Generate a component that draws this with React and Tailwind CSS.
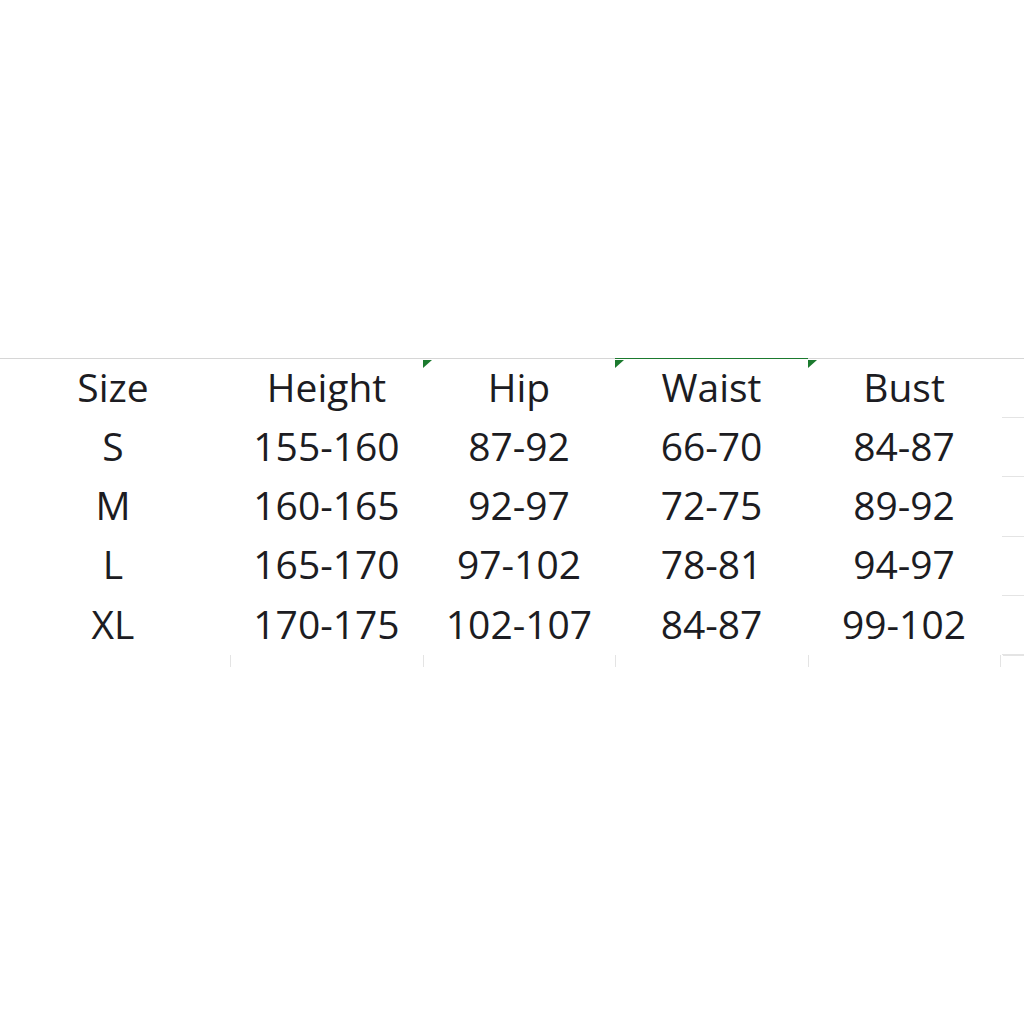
import React from "react";

const headers = ["Size", "Height", "Hip", "Waist", "Bust"];

const rows = [
  ["S", "155-160", "87-92", "66-70", "84-87"],
  ["M", "160-165", "92-97", "72-75", "89-92"],
  ["L", "165-170", "97-102", "78-81", "94-97"],
  ["XL", "170-175", "102-107", "84-87", "99-102"],
];

// little green "number stored as text" flag in the cell corner
const Flag = () => (
  <svg className="absolute left-0 top-[1px]" width="9" height="8" viewBox="0 0 9 8">
    <polygon points="0,0 9,0 0,8" fill="#1b7a2e" />
  </svg>
);

const cols = "grid grid-cols-[230px_193px_192px_193px_192px_1fr]";

const App = () => {
  return (
    <div className="w-full h-[1024px] bg-white pt-[358px] font-['Open_Sans','Noto_Sans',sans-serif] text-[39px] text-[#1c1c22]">
      {/* header row */}
      <div className={cols}>
        {headers.map((h, i) => (
          <div
            key={h}
            className={
              "relative h-[60px] flex items-center justify-center border-t " +
              (i === 0 ? "pr-[4px] " : "") +
              (i === 3 ? "border-t-[#1b7a2e]" : "border-t-[#d6d6d6]")
            }
          >
            {(i === 2 || i === 3 || i === 4) && <Flag />}
            <span className="leading-none -mt-[5px]">{h}</span>
          </div>
        ))}
        <div className="h-[60px] border-t border-t-[#d6d6d6] flex flex-col justify-end">
          <div className="ml-[2px] border-b border-[#e4e4e4]" />
        </div>
      </div>

      {/* body rows */}
      {rows.map(r => (
        <div key={r[0]} className={cols}>
          {r.map((c, i) => (
            <div
              key={i}
              className={"h-[59.3px] flex items-center justify-center " + (i === 0 ? "pr-[4px]" : "")}
            >
              <span className="leading-none -mt-[5px]">{c}</span>
            </div>
          ))}
          <div className="h-[59.3px] flex flex-col justify-end">
            <div className="ml-[2px] border-b border-[#e4e4e4]" />
          </div>
        </div>
      ))}

      {/* stub of the next, empty row */}
      <div className={cols}>
        <div className="h-[12px]" />
        <div className="h-[12px] border-l border-[#e4e4e4]" />
        <div className="h-[12px] border-l border-[#e4e4e4]" />
        <div className="h-[12px] border-l border-[#e4e4e4]" />
        <div className="h-[12px] border-l border-[#e4e4e4]" />
        <div className="h-[12px] border-l border-[#e4e4e4]">
          <div className="ml-[2px] border-t border-[#e4e4e4]" />
        </div>
      </div>
    </div>
  );
};

export default App;
